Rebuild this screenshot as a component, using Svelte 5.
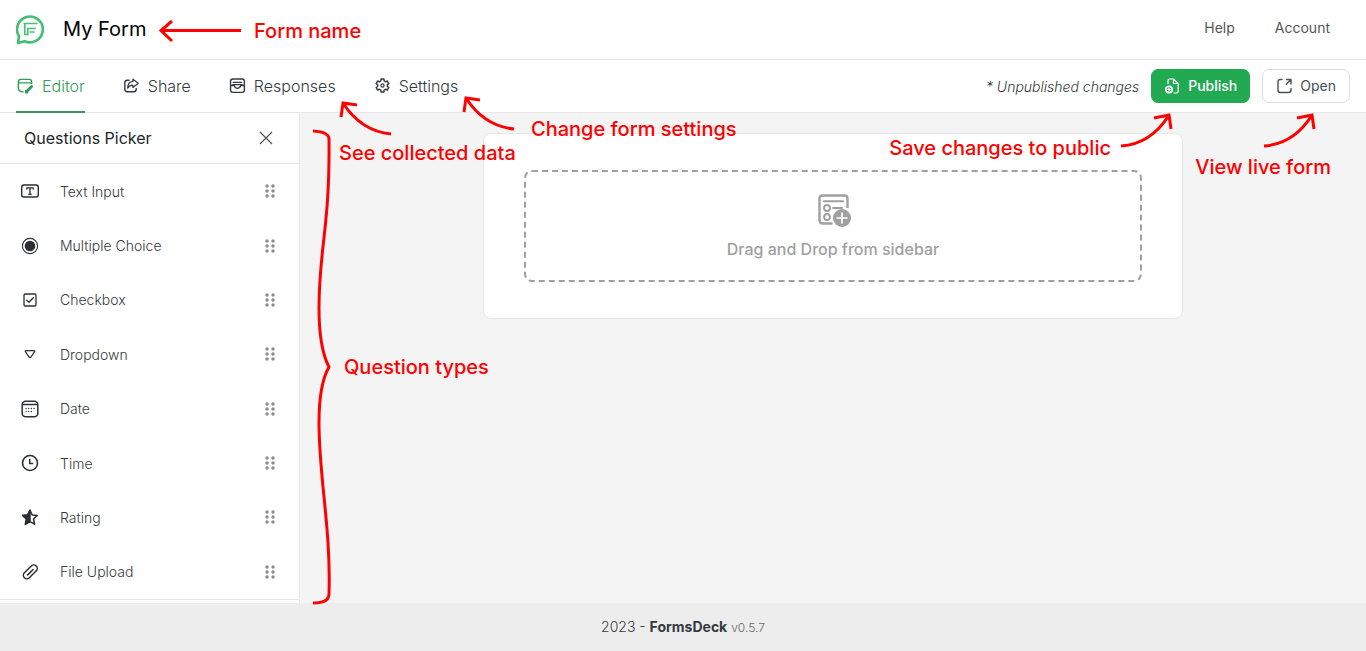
<script lang="ts">

  type TabType = {
    name: string;
    icon: string;
  }
  const tabs: TabType[] = [
    { name: 'Editor', icon: 'editor' },
    { name: 'Share', icon: 'share' },
    { name: 'Responses', icon: 'responses' },
    { name: 'Settings', icon: 'settings' }
  ]
  let currentTab: number = 0

  const questions: string[] = [
    'Text Input',
    'Multiple Choice',
    'Checkbox',
    'Dropdown',
    'Date',
    'Time',
    'Rating',
    'File Upload'
  ]
  let pickerOpen: boolean = true

  // grip dots, two columns of three
  const dots = [[2, 2], [8, 2], [2, 7], [8, 7], [2, 12], [8, 12]]

</script>

<div class="page">
  <header class="topbar">
    <a class="logo" href="#home" aria-label="FormsDeck">
      <svg width="30" height="30" viewBox="0 0 30 30" fill="none" stroke="#45c072">
        <path d="M2 28 3 21.3A12.900 12.900 0 1 1 8.600 26.200Z" stroke-width="2.700" stroke-linejoin="round" />
        <path d="M7.500 8.500h14M8.800 8.500v11.500M8.800 19.500h3V13.500h8M13.500 17h5" stroke-width="1.600" />
      </svg>
    </a>
    <h1>My Form</h1>
    <nav class="links">
      <a href="#help">Help</a>
      <a href="#account">Account</a>
    </nav>
  </header>

  <div class="toolbar">
    <nav class="tabs">
      {#each tabs as tab, index}
        <button class="tab" class:active={index == currentTab} on:click={() => currentTab = index}>
          <svg width="18" height="18" viewBox="-1 0 19 19" fill="none" stroke="currentColor" stroke-width="1.5" stroke-linecap="round" stroke-linejoin="round">
            {#if tab.icon == 'editor'}
              <path d="M6.5 15.7Q1.5 15.5 1.5 11V5Q1.5 2.5 4 2.5h9Q15.5 2.5 15.500 5V7M1.5 6.2h14" />
              <path d="M15.5 10 10.7 14.8" stroke-width="3" />
              <path d="M9.2 14.3v2.3h2Z" fill="currentColor" />
            {:else if tab.icon == 'share'}
              <path d="M6.5 3.5H4.500Q2 3.5 2 6v7q0 2.5 2.5 2.5h7Q14 15.5 14 13v-1" />
              <path d="M10.5 2.3 16.2 6.6 10.5 11V8.6Q6.8 8.4 5 11.8 5 5.2 10.5 4.7Z" stroke-width="1.3" />
            {:else if tab.icon == 'responses'}
              <rect x="1.7" y="2.2" width="14.600" height="14" rx="2.400" />
              <path d="M4.500 5.700h9M2 9.200H5.700q.5 2.800 3.300 2.800t3.300-2.800h3.700M2 9.200l2.500-1.200h9l2.500 1.200" stroke-width="1.300" />
            {:else}
              <path d="M7.43 2.18H10.57L10.7 4.08 12.4 5.08 14.12 4.23 15.69 6.95 14.1 8.01V9.99L15.69 11.05 14.12 13.77 12.4 12.92 10.7 13.92 10.57 15.82H7.43L7.3 13.92 5.6 12.92 3.88 13.77 2.31 11.05 3.9 9.99V8.01L2.31 6.95 3.88 4.23 5.6 5.08 7.3 4.08Z" />
              <circle cx="9" cy="9" r="1.7" stroke-width="1.3" />
            {/if}
          </svg>
          {tab.name}
        </button>
      {/each}
    </nav>
    <div class="actions">
      <em>* Unpublished changes</em>
      <button class="btn publish">
        <svg width="16" height="16" viewBox="0 0 16 16" fill="none" stroke="currentColor" stroke-width="1.2" stroke-linejoin="round">
          <path d="M4 6V3Q4 1 6 1h3.5L14.2 5.5V13q0 2-2 2H9.5M9.5 1v4.5h4.5" />
          <circle cx="5" cy="11.4" r="4" fill="currentColor" stroke="none" />
          <path d="M2.7 10.7q2.3-2 4.4 0M2.9 12.3q2.3 1.8 4.4 0" stroke="#22aa53" stroke-width="1" />
        </svg>
        Publish
      </button>
      <button class="btn open">
        <svg width="16" height="16" viewBox="0 0 16 16" fill="none" stroke="currentColor" stroke-width="1.4" stroke-linecap="round" stroke-linejoin="round">
          <path d="M6 1.5H4.5Q2 1.5 2 4v8q0 2.5 2.5 2.5h8q2.5 0 2.5-2.5V10.5M10.5 1.5H15V6M14.7 1.8 10.3 6.2" />
        </svg>
        Open
      </button>
    </div>
  </div>

  <div class="workspace">
    {#if pickerOpen}
      <aside class="picker">
        <div class="picker-head">
          <h2>Questions Picker</h2>
          <button class="close" aria-label="Close" on:click={() => pickerOpen = false}>
            <svg width="14" height="14" viewBox="0 0 14 14" stroke="currentColor" stroke-width="1.3">
              <path d="M1 1 13 13M13 1 1 13" />
            </svg>
          </button>
        </div>
        <ul>
          {#each questions as question}
            <li draggable="true">
              <svg class="kind" width="20" height="20" viewBox="0 0 20 20" fill="none" stroke="currentColor" stroke-width="1.5" stroke-linejoin="round" stroke-linecap="round">
                {#if question == 'Text Input'}
                  <rect x="1.7" y="4" width="16.6" height="12" rx="2.2" stroke-width="1.4" />
                  <path d="M6.8 8.5V6.8h6.4v1.7M10 7v6.300M8.3 13.3h3.400" stroke-width="1.3" stroke-linecap="butt" />
                {:else if question == 'Multiple Choice'}
                  <circle cx="10" cy="10" r="7.6" stroke-width="1.1" />
                  <circle cx="10" cy="10" r="5.3" fill="currentColor" stroke="none" />
                {:else if question == 'Checkbox'}
                  <rect x="4" y="4" width="12" height="12" rx="1.2" stroke-width="1.3" />
                  <path d="M6.8 10.2 9 12.3 13.2 7.8" stroke-width="1.3" />
                {:else if question == 'Dropdown'}
                  <path d="M6 6.700h8q1 0 .6 1L11 13q-1 1-2 0L5.400 7.700q-.4-1 .6-1Z" stroke-width="1.3" />
                {:else if question == 'Date'}
                  <rect x="2.2" y="2.2" width="15.6" height="15.6" rx="3.5" />
                  <path d="M2.5 5.500h15" stroke-width="1.4" />
                  <path d="M6 9.5h.1M8.6 9.5h.1M11.3 9.5h.1M14 9.5h.1M6 12.5h.1M8.6 12.5h.1M11.3 12.5h.1" stroke-width="1.3" />
                {:else if question == 'Time'}
                  <circle cx="10" cy="10" r="7.5" stroke-width="1.6" />
                  <path d="M9.7 6v4.500h3.500" stroke-linecap="butt" />
                {:else if question == 'Rating'}
                  <path d="M10 3.300 12.200 7.900 17.300 8.500 13.500 12 14.600 17.200 10 14.600 5.400 17.200 6.500 12 2.700 8.500 7.800 7.900Z" />
                  <path d="M10 3.300V14.600L5.400 17.200 6.500 12 2.700 8.500 7.800 7.900Z" fill="currentColor" />
                {:else}
                  <path transform="rotate(45 10 10)" d="M10.400 6v7.700M13.600 6.500v8a3.500 3.500 0 0 1-7 0V4.800a3.500 3.500 0 0 1 7 0v1.700" />
                {/if}
              </svg>
              <span>{question}</span>
              <svg class="grip" width="10" height="14" viewBox="0 0 10 14">
                {#each dots as [x, y]}
                  <circle cx={x} cy={y} r="1.7" fill="currentColor" />
                {/each}
              </svg>
            </li>
          {/each}
        </ul>
      </aside>
    {/if}

    <main>
      <section class="card">
        <div class="dropzone">
          <svg width="36" height="34" viewBox="-3 -1 36 34" fill="none" stroke="currentColor" stroke-width="2">
            <path d="M14.5 29.5H5q-3.5 0-3.5-3.5V4.5Q1.5 1.5 5 1.5h21.5q3 0 3 3V14" stroke-width="2.4" />
            <path d="M6 7.2h19M15 14h9" stroke-linecap="round" />
            <circle cx="9" cy="14" r="2.9" />
            <circle cx="9" cy="23" r="2.9" />
            <circle cx="24" cy="24" r="9" fill="currentColor" stroke="none" />
            <path d="M24 18.500v11M18.500 24h11" stroke="#fff" stroke-width="1.7" />
          </svg>
          <p>Drag and Drop from sidebar</p>
        </div>
      </section>
    </main>
  </div>

  <footer>2023 - <strong>FormsDeck</strong> <small>v0.5.7</small></footer>

  <!-- guide notes drawn over the editor -->
  <svg class="mark name-mark" width="84" height="24" viewBox="0 0 84 24">
    <path d="M83 11.500H3M14 2 3 11.500 14 22" />
  </svg>
  <span class="note name-note">Form name</span>

  <svg class="mark data-mark" width="54" height="36" viewBox="0 0 54 36">
    <path d="M52 33Q22 30 4 2M2 16 4 2 18 4" />
  </svg>
  <span class="note data-note">See collected data</span>

  <svg class="mark settings-mark" width="54" height="36" viewBox="0 0 54 36">
    <path d="M52 33Q22 30 4 2M2 16 4 2 18 4" />
  </svg>
  <span class="note settings-note">Change form settings</span>

  <span class="note save-note">Save changes to public</span>
  <svg class="mark save-mark" width="54" height="36" viewBox="0 0 54 36">
    <path d="M2 33Q32 31 50 2M35 5 50 2 52 16" />
  </svg>

  <svg class="mark live-mark" width="54" height="36" viewBox="0 0 54 36">
    <path d="M2 33Q32 31 50 2M35 5 50 2 52 16" />
  </svg>
  <span class="note live-note">View live form</span>

  <svg class="mark types-mark" width="20" height="478" viewBox="0 0 20 478">
    <path d="M0 3Q16 4 16 11C17 100 6 120 6 180Q6 220 16 239Q6 256 6 295C6 350 18 400 16 466Q16 475 0 475" />
  </svg>
  <span class="note types-note">Question types</span>
</div>

<style>
  :global(body) {
    margin: 0;
    font-family: Inter, "Liberation Sans", sans-serif;
    color: #343a40;
  }
  .page {
    position: relative;
    display: flex;
    flex-direction: column;
    min-height: 100vh;
    background: #fff;
  }
  button {
    font: inherit;
    color: inherit;
    cursor: pointer;
  }
  svg {
    flex: none;
  }
  .topbar {
    display: flex;
    align-items: center;
    height: 59px;
    padding: 0 36px 0 16px;
    border-bottom: 1px solid #e7e7e7;
  }
  .logo {
    display: flex;
    margin-right: 17px;
  }
  h1 {
    margin: 0;
    padding-bottom: 2px;
    font-size: 20px;
    font-weight: 400;
    color: #000;
  }
  .links {
    display: flex;
    gap: 40px;
    margin-left: auto;
    padding-bottom: 4px;
    font-size: 14px;
  }
  .links a {
    color: #555;
    text-decoration: none;
  }
  .toolbar {
    display: flex;
    justify-content: space-between;
    align-items: center;
    height: 52px;
    padding: 0 16px;
    border-bottom: 1px solid #e7e7e7;
  }
  .tabs {
    display: flex;
    align-self: stretch;
    gap: 37px;
    margin-bottom: -1px;
  }
  .tab {
    display: flex;
    align-items: center;
    gap: 8px;
    padding: 0;
    border: 0;
    border-bottom: 2px solid transparent;
    background: none;
    font-size: 16px;
    font-weight: 300;
  }
  .tab.active {
    border-color: #3d9461;
    color: #2f9e57;
  }
  .actions {
    display: flex;
    align-items: center;
    gap: 12px;
    font-size: 14px;
  }
  .actions em {
    font-weight: 300;
  }
  .btn {
    display: flex;
    align-items: center;
    gap: 8px;
    height: 34px;
    padding: 0 13px 1px;
    border: 1px solid #ddd;
    border-radius: 7px;
    background: #fff;
  }
  .open {
    color: #495057;
  }
  .publish {
    padding: 0 12px 1px;
    border-color: #22aa53;
    background: #22aa53;
    color: #fff;
    font-weight: 500;
  }
  .workspace {
    flex: 1;
    display: flex;
    background: #f4f4f4;
  }
  .picker {
    display: flex;
    flex-direction: column;
    width: 299px;
    padding-bottom: 3px;
    border-right: 1px solid #e7e7e7;
    background: #fff;
  }
  .picker-head {
    display: flex;
    justify-content: space-between;
    align-items: center;
    height: 50px;
    padding: 0 24px;
    border-bottom: 1px solid #e7e7e7;
  }
  h2 {
    margin: 0;
    font-size: 16px;
    font-weight: 400;
    color: #212529;
  }
  .close {
    display: flex;
    padding: 2px;
    border: 0;
    background: none;
    color: #555;
  }
  ul {
    flex: 1;
    display: flex;
    flex-direction: column;
    margin: 0;
    padding: 0;
    border-bottom: 1px solid #e7e7e7;
    list-style: none;
  }
  li {
    flex: 1;
    display: flex;
    align-items: center;
    gap: 20px;
    min-height: 36px;
    padding: 0 24px 0 20px;
    font-size: 14px;
    font-weight: 300;
    cursor: grab;
  }
  .kind {
    color: #2b3035;
  }
  .grip {
    margin-left: auto;
    color: #8c8c8c;
  }
  main {
    flex: 1;
    padding: 20px;
  }
  .card {
    box-sizing: border-box;
    max-width: 700px;
    margin: 0 auto;
    padding: 36px 40px;
    border: 1px solid #e7e7e7;
    border-radius: 8px;
    background: #fff;
  }
  .dropzone {
    display: flex;
    flex-direction: column;
    align-items: center;
    gap: 12px;
    padding: 21px 20px;
    border: 2px dashed #a0a0a0;
    border-radius: 8px;
    color: #a0a0a0;
  }
  .dropzone p {
    margin: 0;
    font-size: 16px;
    font-weight: 500;
    line-height: 20px;
  }
  footer {
    height: 48px;
    background: #ededed;
    font-size: 14px;
    font-weight: 300;
    line-height: 48px;
    text-align: center;
  }
  footer strong {
    font-weight: 700;
  }
  footer small {
    font-size: 12px;
    color: #666;
  }
  .note {
    position: absolute;
    color: #f00;
    font-size: 20px;
    font-weight: 500;
    line-height: 24px;
    white-space: nowrap;
  }
  .mark {
    position: absolute;
    fill: none;
    stroke: #f00;
    stroke-width: 3;
    pointer-events: none;
  }
  .name-mark { left: 158px; top: 19px; }
  .name-note { left: 254px; top: 19px; }
  .data-mark { left: 339px; top: 101px; }
  .data-note { left: 339px; top: 141px; }
  .settings-mark { left: 462px; top: 96px; }
  .settings-note { left: 531px; top: 117px; }
  .save-mark { right: 193px; top: 113px; }
  .save-note { right: 255px; top: 136px; }
  .live-mark { right: 50px; top: 113px; }
  .live-note { right: 35px; top: 155px; }
  .types-mark { left: 313px; top: 128px; }
  .types-note { left: 344px; top: 355px; }
</style>
